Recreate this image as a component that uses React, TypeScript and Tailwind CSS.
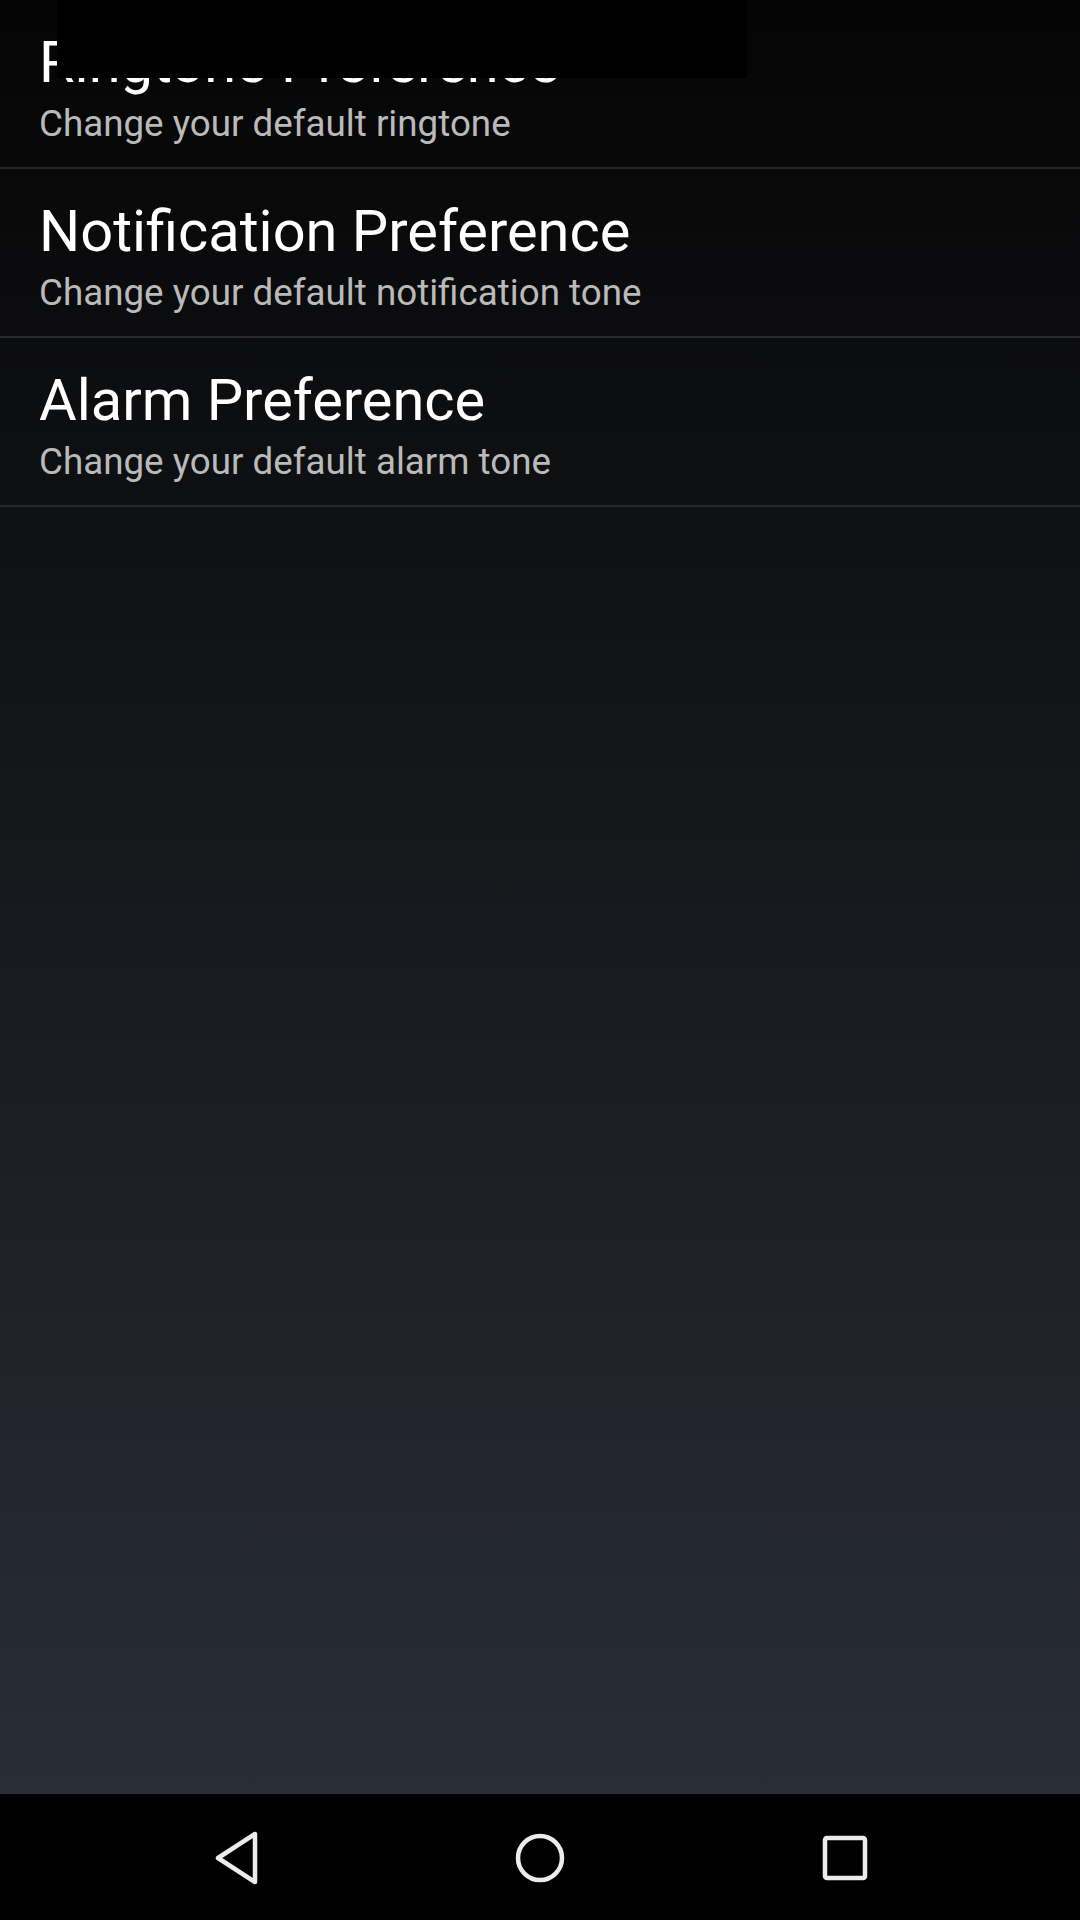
import React from "react";

const rows = [
  { title: "Ringtone Preference", sub: "Change your default ringtone" },
  { title: "Notification Preference", sub: "Change your default notification tone" },
  { title: "Alarm Preference", sub: "Change your default alarm tone" },
];

export default function App() {
  return (
    <div className="w-[1080px] h-[1920px] flex flex-col overflow-hidden bg-black" style={{ fontFamily: "Roboto, 'Noto Sans', sans-serif" }}>
      <div className="relative flex-1 bg-[linear-gradient(to_bottom,#050505,#292d36)]">
        {rows.map((r) => (
          <div key={r.title} className="h-[169px] border-b-2 border-[#26282b] pl-[39px] pt-[30px]">
            <div className="text-[57.75px] leading-[64px] text-white whitespace-nowrap">{r.title}</div>
            <div className="mt-[10px] text-[36.75px] leading-[40px] text-[#bababa] whitespace-nowrap">{r.sub}</div>
          </div>
        ))}
        <div className="absolute left-[57px] top-0 w-[690px] h-[78px] bg-black" />
      </div>
      <div className="h-[126px] bg-black flex items-center justify-center">
        <div className="relative w-full h-full">
          <svg className="absolute left-[210px] top-[36px]" width="52" height="56" viewBox="0 0 52 56">
            <path d="M45 4 L45 52 L8 28 Z" fill="none" stroke="#ececec" strokeWidth="4.5" strokeLinejoin="round" />
          </svg>
          <svg className="absolute left-[512px] top-[36px]" width="56" height="56" viewBox="0 0 56 56">
            <circle cx="28" cy="28" r="22" fill="none" stroke="#ececec" strokeWidth="4.5" />
          </svg>
          <svg className="absolute left-[819px] top-[38px]" width="52" height="52" viewBox="0 0 52 52">
            <rect x="6" y="6" width="40" height="40" rx="2" fill="none" stroke="#ececec" strokeWidth="4.5" />
          </svg>
        </div>
      </div>
    </div>
  );
}
